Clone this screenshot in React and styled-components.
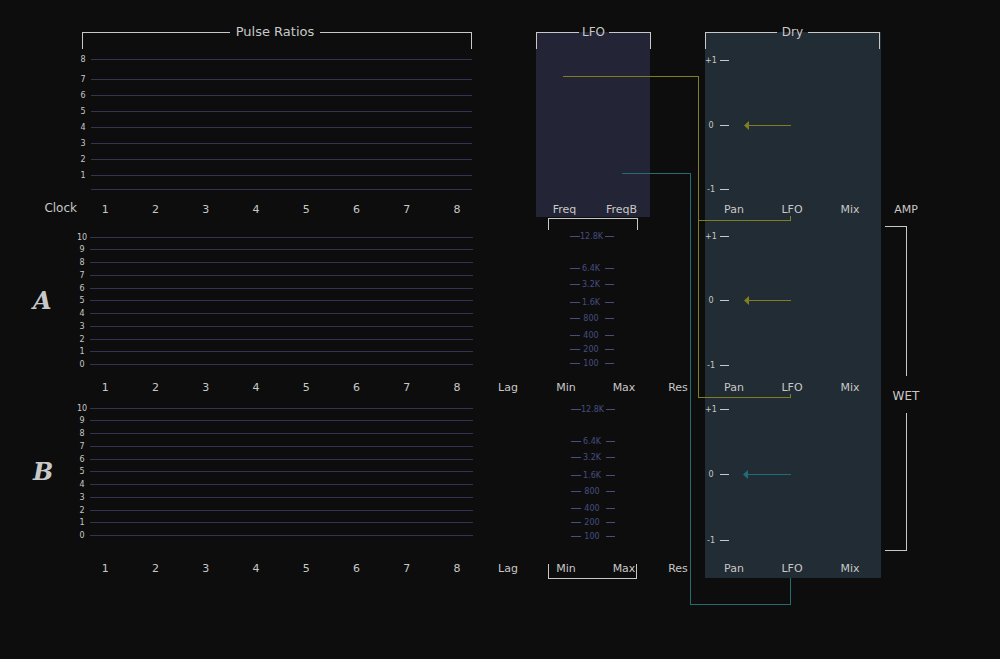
import React from "react";
import styled, { createGlobalStyle, ThemeProvider } from "styled-components";

const theme = {
  page: "#0d0d0d",
  text: "#c8c8c8",
  lfo: "#232435",
  mixer: "#222c34",
  staff: "#343352",
  tick: "#464e80",
  wireA: "#7f7f22",
  wireB: "#226c78",
};

const GlobalStyle = createGlobalStyle`
  * { box-sizing: border-box; }
  body {
    margin: 0;
    background: ${theme.page};
    color: ${theme.text};
    font-family: "DejaVu Sans", sans-serif;
    font-size: 11px;
    line-height: 16px;
  }
  h1, h2, ol, ul { margin: 0; padding: 0; font-weight: normal; list-style: none; }
`;

const Panel = styled.main`
  display: grid;
  grid-template-columns: 77px minmax(402px, 1fr) 226px 176px 119px;
  grid-template-rows: 185px 181px 180px;
  padding: 32px 0 40px;
`;

const Cell = styled.section`
  grid-column: ${(p) => p.$col};
  grid-row: ${(p) => p.$row};
  display: flex;
  flex-direction: column;
  justify-content: space-between;
  padding: ${(p) => p.$pad || "0"};
`;

const MixerBackground = styled.div`
  grid-column: 4;
  grid-row: 1 / 4;
  background: ${(p) => p.theme.mixer};
`;

const ClockLabel = styled.div`
  grid-column: 1;
  grid-row: 1;
  align-self: end;
  text-align: right;
  padding-bottom: 1px;
  font-size: 12px;
`;

const VoiceName = styled.h2`
  grid-column: 1;
  grid-row: ${(p) => p.$row};
  padding: ${(p) => p.$pad};
  font-family: "DejaVu Serif", serif;
  font-weight: bold;
  font-style: italic;
  font-size: 24px;
  line-height: 138px;
`;

/* Title set into a bracket that opens downwards */
const Header = styled.div`
  display: flex;
  align-items: flex-start;
  height: 17px;
  margin: ${(p) => p.$margin || "0"};
`;

const HeaderArm = styled.span`
  flex: ${(p) => p.$grow || 1} 1 0px;
  height: 100%;
  border-top: 1px solid ${(p) => p.theme.text};
  border-left: ${(p) => (p.$left ? "1px solid" : "none")};
  border-right: ${(p) => (p.$left ? "none" : "1px solid")};
`;

const Title = styled.h2`
  width: ${(p) => p.$width};
  margin-top: -8px;
  font-size: ${(p) => p.$size || "12px"};
  text-align: center;
  white-space: nowrap;
`;

const Scale = styled.ol`
  display: flex;
  flex-direction: column;
  font-size: 8px;
  line-height: 11px;
  padding: ${(p) => p.$pad || "0"};
`;

const ScaleRow = styled.li`
  display: grid;
  grid-template-columns: ${(p) => p.$cols};
  align-items: center;
  height: 11px;
  margin-top: ${(p) => p.$gap}px;
  text-align: center;
  white-space: nowrap;
  color: ${(p) => p.$color};
`;

const ScaleLabel = styled.span`
  padding-right: 3px;
`;

const Line = styled.span`
  height: 1px;
  background: ${(p) => p.$color || "currentColor"};
`;

const Steps = styled.ol`
  display: grid;
  grid-template-columns: repeat(8, 1fr);
  margin: 0 -3px 0 3px;
  padding-top: 2px;
  line-height: 14px;
  text-align: center;
`;

const Labels = styled.ul`
  display: grid;
  grid-template-columns: ${(p) => p.$cols};
  grid-template-rows: 14px;
  padding-top: 2px;
  line-height: 14px;
  text-align: center;
`;

const Label = styled.li`
  grid-row: 1;
  grid-column: ${(p) => p.$col};
`;

const LfoPanel = styled.div`
  display: flex;
  flex-direction: column;
  justify-content: space-between;
  flex: 1;
  margin: 0 55px 0 57px;
  background: ${(p) => p.theme.lfo};
`;

const RangeTop = styled.div`
  width: 90px;
  height: 12px;
  margin: 0 0 1px 69px;
  border: 1px solid;
  border-bottom: none;
`;

const RangeBottom = styled.li`
  grid-row: 1;
  grid-column: 2 / 4;
  width: 89px;
  height: 15px;
  margin: 2px 0 0 11px;
  border: 1px solid;
  border-top: none;
`;

const Output = styled.aside`
  grid-column: 5;
  grid-row: 1 / 4;
  width: 46px;
  padding: 170px 0 0 4px;
  text-align: center;
`;

const OutputArm = styled.div`
  width: 22px;
  height: ${(p) => p.$height};
  margin-top: ${(p) => (p.$top ? "8px" : "0")};
  border-right: 1px solid;
  border-top: ${(p) => (p.$top ? "1px solid" : "none")};
  border-bottom: ${(p) => (p.$top ? "none" : "1px solid")};
`;

const Wet = styled.div`
  height: 37px;
  font-size: 12px;
  line-height: 40px;
`;

const Wiring = styled.svg`
  grid-column: 3 / 5;
  grid-row: 1 / 4;
  align-self: start;
  width: 402px;
  height: 573px;
  margin-bottom: -27px;
  pointer-events: none;
`;

const ratioScale = [[8, 0], [7, 9], [6, 5], [5, 5], [4, 5], [3, 5], [2, 5], [1, 5], ["", 3]];
const levelScale = [[10, 0], [9, 1], [8, 2], [7, 2], [6, 2], [5, 1], [4, 2], [3, 2], [2, 2], [1, 1], [0, 2]];
const freqScale = [
  ["12.8K", 0], ["6.4K", 21], ["3.2K", 5], ["1.6K", 7],
  ["800", 5], ["400", 6], ["200", 3], ["100", 3],
];

const Staff = ({ rows, pad }) => (
  <Scale $pad={pad}>
    {rows.map(([label, gap]) => (
      <ScaleRow key={label} $gap={gap} $cols="13px 1fr">
        <ScaleLabel>{label}</ScaleLabel>
        <Line $color={theme.staff} />
      </ScaleRow>
    ))}
  </Scale>
);

const StepNumbers = () => (
  <Steps>
    {[1, 2, 3, 4, 5, 6, 7, 8].map((n) => <li key={n}>{n}</li>)}
  </Steps>
);

const FreqScale = ({ pad }) => (
  <Scale $pad={pad}>
    {freqScale.map(([label, gap]) => (
      <ScaleRow key={label} $gap={gap} $cols="10px 25px 9px" $color={theme.tick}>
        <Line />
        <ScaleLabel>{label}</ScaleLabel>
        <Line />
      </ScaleRow>
    ))}
  </Scale>
);

const PanScale = ({ gaps, pad }) => (
  <Scale $pad={pad}>
    {["+1", "0", "-1"].map((label, i) => (
      <ScaleRow key={label} $gap={gaps[i]} $cols="15px 9px">
        <ScaleLabel>{label}</ScaleLabel>
        <Line />
      </ScaleRow>
    ))}
  </Scale>
);

const FilterLabels = ({ bracket }) => (
  <Labels $cols="58px 58px 58px 50px">
    {["Lag", "Min", "Max", "Res"].map((t, i) => (
      <Label key={t} $col={i + 1}>{t}</Label>
    ))}
    {bracket && <RangeBottom aria-hidden="true" />}
  </Labels>
);

const MixLabels = () => (
  <Labels $cols="58px 58px 58px">
    {["Pan", "LFO", "Mix"].map((t, i) => (
      <Label key={t} $col={i + 1}>{t}</Label>
    ))}
  </Labels>
);

const Bracketed = ({ title, width, size, arms = [1, 1], margin }) => (
  <Header $margin={margin}>
    <HeaderArm $left $grow={arms[0]} />
    <Title $width={width} $size={size}>{title}</Title>
    <HeaderArm $grow={arms[1]} />
  </Header>
);

export default function App() {
  return (
    <ThemeProvider theme={theme}>
      <GlobalStyle />
      <Panel>
        <MixerBackground />

        <ClockLabel>Clock</ClockLabel>
        <VoiceName $row={2} $pad="15px 0 0 33px">A</VoiceName>
        <VoiceName $row={3} $pad="5px 0 0 33px">B</VoiceName>

        <Cell $col={2} $row={1}>
          <Bracketed
            title="Pulse Ratios"
            width="90px"
            size="13px"
            arms={[148, 152]}
            margin="0 7px 0 5px"
          />
          <Staff rows={ratioScale} pad="0 7px 2px 1px" />
          <StepNumbers />
        </Cell>
        <Cell $col={2} $row={2} $pad="15px 0 3px">
          <Staff rows={levelScale} pad="0 6px 0 0" />
          <StepNumbers />
        </Cell>
        <Cell $col={2} $row={3} $pad="5px 0 2px">
          <Staff rows={levelScale} pad="0 6px 0 0" />
          <StepNumbers />
        </Cell>

        <Cell $col={3} $row={1}>
          <LfoPanel>
            <Bracketed title="LFO" width="30px" margin="0 -1px 0 0" />
            <Labels $cols="1fr 1fr">
              <Label $col={1}>Freq</Label>
              <Label $col={2}>FreqB</Label>
            </Labels>
          </LfoPanel>
        </Cell>
        <Cell $col={3} $row={2} $pad="1px 0 3px">
          <div>
            <RangeTop />
            <FreqScale pad="0 0 0 91px" />
          </div>
          <FilterLabels />
        </Cell>
        <Cell $col={3} $row={3} $pad="6px 0 2px">
          <FreqScale pad="0 0 0 92px" />
          <FilterLabels bracket />
        </Cell>

        <Cell $col={4} $row={1}>
          <Bracketed title="Dry" width="31px" margin="0 1px 0 0" />
          <PanScale gaps={[0, 54, 53]} />
          <MixLabels />
        </Cell>
        <Cell $col={4} $row={2} $pad="14px 0 3px">
          <PanScale gaps={[0, 53, 54]} />
          <MixLabels />
        </Cell>
        <Cell $col={4} $row={3} $pad="6px 0 2px">
          <PanScale gaps={[0, 54, 55]} />
          <MixLabels />
        </Cell>

        <Wiring viewBox="479 32 402 573" fill="none" aria-hidden="true">
          <g transform="translate(0.5 0.5)" shapeRendering="crispEdges">
            <path
              stroke={theme.wireA}
              d="M562 76H698V397H790V393M698 220H790V215M748 125H790M748 300H790"
            />
            <path stroke={theme.wireB} d="M621 173H690V604H790V577M747 474H790" />
          </g>
          <path fill={theme.wireA} d="M744 125.500L749 121V130ZM744 300.500L749 296V305Z" />
          <path fill={theme.wireB} d="M743 474.500L748 470V479Z" />
        </Wiring>

        <Output>
          <div>AMP</div>
          <OutputArm $top $height="150px" />
          <Wet>WET</Wet>
          <OutputArm $height="138px" />
        </Output>
      </Panel>
    </ThemeProvider>
  );
}
